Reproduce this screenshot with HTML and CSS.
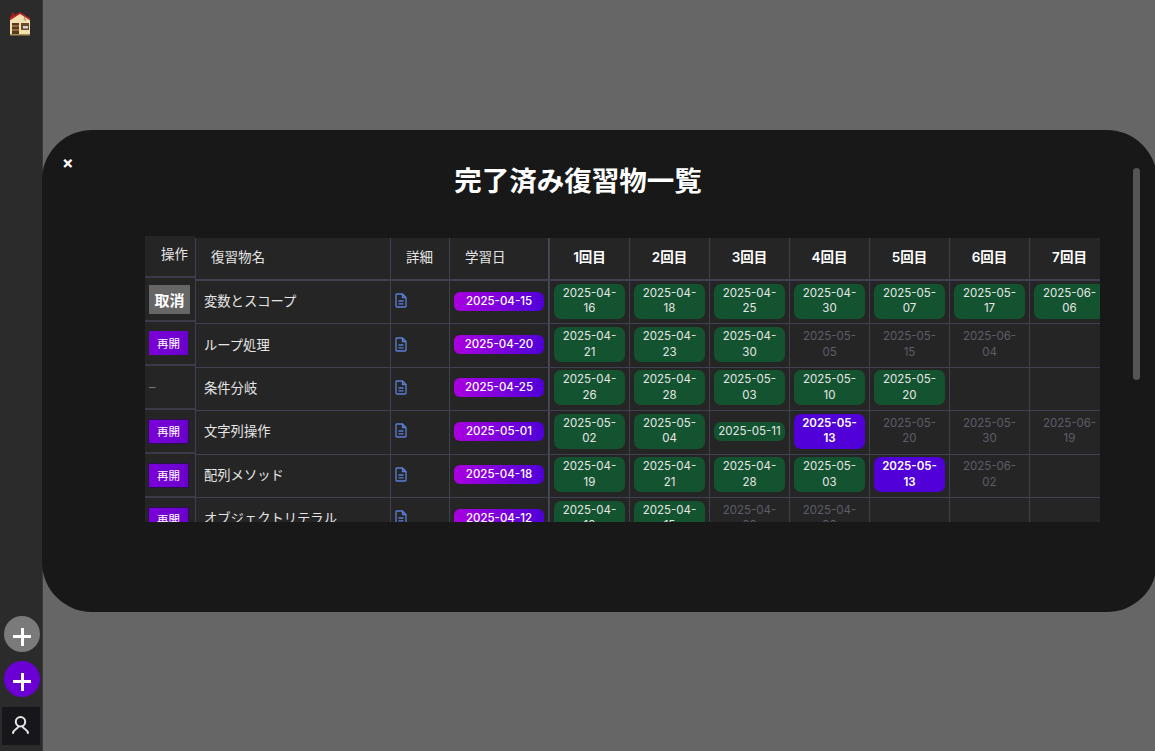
FILE: index.html

```html
<!DOCTYPE html>
<html lang="ja">

<head>
  <meta charset="UTF-8">
  <title>完了済み復習物一覧</title>
  <link rel="stylesheet" href="styles.css">
</head>

<body>
  <nav class="sidebar">
    <a class="home" href="#">
      <svg width="22" height="26" viewBox="0 0 22 26">
        <path d="M1 6 L4 1 L5.5 3 V5 L2 9 Z" fill="#a81c1c" />
        <path d="M1 8.5 L11 2 L21 8.5 V24 H1 Z" fill="#f3e2b0" />
        <path d="M0.7 8.5 L11 2 L21.3 8.5" fill="none" stroke="#b3262a" stroke-width="1.5" />
        <path d="M1 23 H21 V24.5 H1 Z" fill="#a89058" />
        <path d="M3 12 H10 V23 H3 Z" fill="#5a3a1e" />
        <path d="M3 15 H10 M3 19 H10" stroke="#c49a5a" stroke-width="1" />
        <path d="M12 12 H20 V19 H12 Z" fill="#6d4a2c" />
        <path d="M14 15 H19 V17.5 H14 Z" fill="#cfd6d8" />
        <path d="M16 6 L15 9 M17 8 L16 10" stroke="#8a8060" stroke-width="0.8" />
      </svg>
    </a>
    <div class="side-bottom">
      <button class="round-btn gray"><span class="plus"></span></button>
      <button class="round-btn purple"><span class="plus"></span></button>
      <button class="user-btn">
        <svg width="22" height="22" viewBox="0 0 22 22" fill="none" stroke="#e6e6e6" stroke-width="2" stroke-linecap="round">
          <circle cx="10.5" cy="6.7" r="4.7" />
          <path d="M3 18 C3.5 14.5 7 14.5 8.5 11.5 M18 18 C17.5 14.5 14 14.5 12.5 11.5" />
        </svg>
      </button>
    </div>
  </nav>

  <div class="modal">
    <span class="close">×</span>
    <h2 class="modal-title">完了済み復習物一覧</h2>
    <div class="table-wrap">
      <div class="action-col">
        <div class="action-head">操作</div>
        <div class="action-cell"><button class="cancel-btn">取消</button></div>
        <div class="action-cell"><button class="reopen-btn">再開</button></div>
        <div class="action-cell"><span class="dash">–</span></div>
        <div class="action-cell"><button class="reopen-btn framed">再開</button></div>
        <div class="action-cell"><button class="reopen-btn framed">再開</button></div>
        <div class="action-cell"><button class="reopen-btn framed">再開</button></div>
      </div>
      <table class="review-table">
        <colgroup>
          <col class="c-name">
          <col class="c-detail">
          <col class="c-study">
          <col class="c-round">
          <col class="c-round">
          <col class="c-round">
          <col class="c-round">
          <col class="c-round">
          <col class="c-round">
          <col class="c-round">
        </colgroup>
        <thead>
          <tr>
            <th>復習物名</th>
            <th>詳細</th>
            <th class="study">学習日</th>
            <th class="round">1回目</th>
            <th class="round">2回目</th>
            <th class="round">3回目</th>
            <th class="round">4回目</th>
            <th class="round">5回目</th>
            <th class="round">6回目</th>
            <th class="round">7回目</th>
          </tr>
        </thead>
        <tbody>
          <tr>
            <td class="name">変数とスコープ</td>
            <td class="detail"><svg class="doc" viewBox="0 0 12 15"><path d="M1.5 1 H7.5 L11 4.5 V13 Q11 14 10 14 H2 Q1 14 1 13 V1.5 Z M7.5 1 V4.5 H11 M3.5 8 H8.5 M3.5 10.8 H8.5" /></svg></td>
            <td class="study"><span class="study-date">2025-04-15</span></td>
            <td><span class="date done">2025-04-<br>16</span></td>
            <td><span class="date done">2025-04-<br>18</span></td>
            <td><span class="date done">2025-04-<br>25</span></td>
            <td><span class="date done">2025-04-<br>30</span></td>
            <td><span class="date done">2025-05-<br>07</span></td>
            <td><span class="date done">2025-05-<br>17</span></td>
            <td><span class="date done">2025-06-<br>06</span></td>
          </tr>
          <tr>
            <td class="name">ループ処理</td>
            <td class="detail"><svg class="doc" viewBox="0 0 12 15"><path d="M1.5 1 H7.5 L11 4.5 V13 Q11 14 10 14 H2 Q1 14 1 13 V1.5 Z M7.5 1 V4.5 H11 M3.5 8 H8.5 M3.5 10.8 H8.5" /></svg></td>
            <td class="study"><span class="study-date">2025-04-20</span></td>
            <td><span class="date done">2025-04-<br>21</span></td>
            <td><span class="date done">2025-04-<br>23</span></td>
            <td><span class="date done">2025-04-<br>30</span></td>
            <td><span class="date todo">2025-05-<br>05</span></td>
            <td><span class="date todo">2025-05-<br>15</span></td>
            <td><span class="date todo">2025-06-<br>04</span></td>
            <td></td>
          </tr>
          <tr>
            <td class="name">条件分岐</td>
            <td class="detail"><svg class="doc" viewBox="0 0 12 15"><path d="M1.5 1 H7.5 L11 4.5 V13 Q11 14 10 14 H2 Q1 14 1 13 V1.5 Z M7.5 1 V4.5 H11 M3.5 8 H8.5 M3.5 10.8 H8.5" /></svg></td>
            <td class="study"><span class="study-date">2025-04-25</span></td>
            <td><span class="date done">2025-04-<br>26</span></td>
            <td><span class="date done">2025-04-<br>28</span></td>
            <td><span class="date done">2025-05-<br>03</span></td>
            <td><span class="date done">2025-05-<br>10</span></td>
            <td><span class="date done">2025-05-<br>20</span></td>
            <td></td>
            <td></td>
          </tr>
          <tr>
            <td class="name">文字列操作</td>
            <td class="detail"><svg class="doc" viewBox="0 0 12 15"><path d="M1.5 1 H7.5 L11 4.5 V13 Q11 14 10 14 H2 Q1 14 1 13 V1.5 Z M7.5 1 V4.5 H11 M3.5 8 H8.5 M3.5 10.8 H8.5" /></svg></td>
            <td class="study"><span class="study-date">2025-05-01</span></td>
            <td><span class="date done">2025-05-<br>02</span></td>
            <td><span class="date done">2025-05-<br>04</span></td>
            <td><span class="date done">2025-05-11</span></td>
            <td><span class="date late">2025-05-<br>13</span></td>
            <td><span class="date todo">2025-05-<br>20</span></td>
            <td><span class="date todo">2025-05-<br>30</span></td>
            <td><span class="date todo">2025-06-<br>19</span></td>
          </tr>
          <tr>
            <td class="name">配列メソッド</td>
            <td class="detail"><svg class="doc" viewBox="0 0 12 15"><path d="M1.5 1 H7.5 L11 4.5 V13 Q11 14 10 14 H2 Q1 14 1 13 V1.5 Z M7.5 1 V4.5 H11 M3.5 8 H8.5 M3.5 10.8 H8.5" /></svg></td>
            <td class="study"><span class="study-date">2025-04-18</span></td>
            <td><span class="date done">2025-04-<br>19</span></td>
            <td><span class="date done">2025-04-<br>21</span></td>
            <td><span class="date done">2025-04-<br>28</span></td>
            <td><span class="date done">2025-05-<br>03</span></td>
            <td><span class="date late">2025-05-<br>13</span></td>
            <td><span class="date todo">2025-06-<br>02</span></td>
            <td></td>
          </tr>
          <tr>
            <td class="name">オブジェクトリテラル</td>
            <td class="detail"><svg class="doc" viewBox="0 0 12 15"><path d="M1.5 1 H7.5 L11 4.5 V13 Q11 14 10 14 H2 Q1 14 1 13 V1.5 Z M7.5 1 V4.5 H11 M3.5 8 H8.5 M3.5 10.8 H8.5" /></svg></td>
            <td class="study"><span class="study-date">2025-04-12</span></td>
            <td><span class="date done">2025-04-<br>13</span></td>
            <td><span class="date done">2025-04-<br>15</span></td>
            <td><span class="date todo">2025-04-<br>22</span></td>
            <td><span class="date todo">2025-04-<br>30</span></td>
            <td></td>
            <td></td>
            <td></td>
          </tr>
        </tbody>
      </table>
    </div>
    <div class="scrollbar"></div>
  </div>
</body>

</html>
```

FILE: styles.css

```css
* {
  box-sizing: border-box;
}

html,
body {
  height: 100%;
}

body {
  margin: 0;
  display: flex;
  overflow: hidden;
  background-color: #666666;
  color: #e6e6e6;
  font-family: Inter, "Noto Sans CJK JP", sans-serif;
  font-size: 13px;
}

button {
  font-family: inherit;
  border: 0;
  padding: 0;
}

/* sidebar */
.sidebar {
  width: 43px;
  flex-shrink: 0;
  display: flex;
  flex-direction: column;
  justify-content: space-between;
  background-color: #2b2b2b;
  border-right: 1px solid #3a3a3a;
}

.home {
  display: block;
  margin: 11px 0 0 9px;
  height: 26px;
}

.side-bottom {
  display: flex;
  flex-direction: column;
  padding: 0 0 6px 2px;
}

.round-btn {
  width: 36px;
  height: 36px;
  margin: 0 0 9px 2px;
  padding-top: 5px;
  border-radius: 50%;
  display: flex;
  align-items: center;
  justify-content: center;
}

.round-btn.gray {
  background-color: #7a7a7a;
}

.round-btn.purple {
  background-color: #6a00d4;
  margin-bottom: 10px;
}

.plus {
  display: block;
  width: 18px;
  height: 18px;
  background:
    linear-gradient(#ffffff, #ffffff) center / 18px 3px no-repeat,
    linear-gradient(#ffffff, #ffffff) center / 3px 18px no-repeat;
}

.user-btn {
  width: 38px;
  height: 38px;
  background-color: #17171b;
  display: flex;
  align-items: center;
  justify-content: center;
}

/* modal */
.modal {
  position: fixed;
  left: 42px;
  top: 130px;
  width: 1115px;
  height: 482px;
  background-color: #181818;
  border-radius: 50px;
}

.close {
  position: absolute;
  left: 20px;
  top: 22px;
  color: #ffffff;
  font-size: 17px;
  font-weight: 700;
  line-height: 22px;
}

.modal-title {
  width: 1072px;
  margin: 0;
  padding-top: 33px;
  height: 106px;
  text-align: center;
  color: #ffffff;
  font-size: 27.5px;
  line-height: 36px;
  font-weight: 700;
}

.scrollbar {
  position: absolute;
  left: 1091px;
  top: 38px;
  width: 7px;
  height: 212px;
  border-radius: 4px;
  background-color: #555555;
}

/* table */
.table-wrap {
  display: flex;
  align-items: flex-start;
  width: 955px;
  height: 286px;
  margin-left: 103px;
  overflow: hidden;
}

.action-col {
  width: 50px;
  flex-shrink: 0;
  background-color: #252525;
}

.action-head {
  height: 42px;
  padding: 9px 0 0 16px;
  line-height: 18px;
  font-size: 13.5px;
  border-bottom: 2px solid #3b3b48;
}

.action-cell {
  height: 44px;
  padding-left: 4px;
  display: flex;
  align-items: center;
  border-bottom: 2px solid #3b3b48;
}

.cancel-btn {
  width: 41px;
  height: 29px;
  background-color: #666666;
  color: #ffffff;
  font-size: 15px;
  font-weight: 700;
}

.reopen-btn {
  width: 39px;
  height: 24px;
  background: linear-gradient(90deg, #7a00d8, #6a00cc);
  color: #ffffff;
  font-size: 11.5px;
}

.reopen-btn.framed {
  width: 41px;
  height: 25px;
  margin-left: -1px;
  border: 1px solid #2a1050;
}

.dash {
  color: #77777f;
}

.review-table {
  flex-shrink: 0;
  width: 914px;
  margin-top: 2px;
  table-layout: fixed;
  border-collapse: separate;
  border-spacing: 0;
  background-color: #252525;
}

.c-name {
  width: 195px;
}

.c-detail {
  width: 59px;
}

.c-study {
  width: 100px;
}

.c-round {
  width: 80px;
}

.review-table th,
.review-table td {
  padding: 0 4px 2px;
  border-left: 1px solid #3f4052;
  border-bottom: 1px solid #3f4052;
  text-align: center;
}

.review-table th {
  height: 43px;
  padding: 0 0 6px 15px;
  text-align: left;
  font-size: 13.5px;
  font-weight: 400;
  border-bottom-width: 2px;
}

.review-table th.round {
  padding-left: 0;
  text-align: center;
  color: #ffffff;
  font-weight: 600;
}

.review-table th.study,
.review-table td.study {
  border-right: 1px solid #4a4a58;
}

.review-table td {
  height: 43.4px;
}

.review-table td.name {
  padding: 0 4px 3px 8px;
  text-align: left;
  font-size: 13.3px;
}

.review-table td.detail {
  padding: 0 4px 3px;
  text-align: left;
}

.review-table td.study {
  padding: 0 4px 2px;
}

.doc {
  display: block;
  width: 12px;
  height: 15px;
  fill: none;
  stroke: #5b7fd6;
  stroke-width: 1.3;
}

.study-date {
  display: block;
  height: 19px;
  line-height: 19px;
  border-radius: 6px;
  background: linear-gradient(90deg, #aa00e0, #4f00d8);
  color: #ffffff;
  font-size: 11.5px;
  font-weight: 500;
}

.date {
  display: block;
  padding: 2px 3px;
  border-radius: 7px;
  font-size: 11.5px;
  line-height: 15.5px;
}

.date.done {
  background-color: #13532f;
}

.date.todo {
  color: #5d5d69;
}

.date.late {
  background-color: #5200d8;
  color: #ffffff;
  font-weight: 600;
}
```
